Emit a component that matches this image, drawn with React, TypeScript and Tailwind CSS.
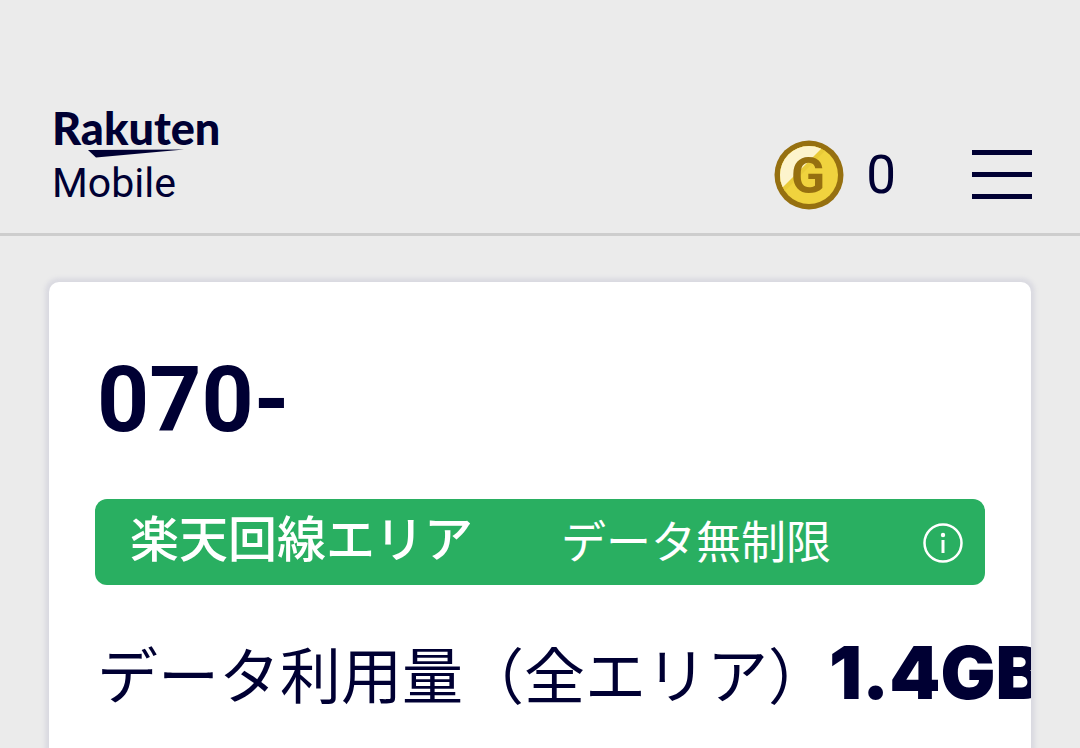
function Logo() {
  return (
    <svg width="176" height="114" viewBox="0 0 176 114" fill="#000033" role="img" aria-label="Rakuten Mobile">
      <text x="0" y="49" fontFamily="Lato, sans-serif" fontWeight="900" fontSize="45">
        Rakuten
      </text>
      <path d="M36 54 L132 53.5 L44 61.5 Z" />
      <text x="0" y="101" fontFamily="Roboto, sans-serif" fontWeight="400" fontSize="41">
        Mobile
      </text>
    </svg>
  );
}

function Coin() {
  return (
    <svg width="70" height="70" viewBox="0 0 70 70" aria-hidden="true">
      <defs>
        <clipPath id="coin-face">
          <circle cx="35" cy="35" r="29" />
        </clipPath>
      </defs>
      <circle cx="35" cy="35" r="34.5" fill="#967010" />
      <g clipPath="url(#coin-face)">
        <rect width="70" height="70" fill="#f0d33e" />
        <path d="M0 0 H62 L0 62 Z" fill="#e9cb38" />
        <path d="M0 0 H56 L0 56 Z" fill="#fdf4cc" />
      </g>
      <text
        x="34"
        y="53"
        textAnchor="middle"
        fontFamily="Roboto, sans-serif"
        fontWeight="700"
        fontSize="50"
        fill="#967010"
      >
        G
      </text>
    </svg>
  );
}

function InfoIcon() {
  return (
    <svg width="40" height="40" viewBox="0 0 40 40" fill="none" stroke="#fff" aria-hidden="true">
      <circle cx="20" cy="20" r="18.5" strokeWidth="2.5" />
      <circle cx="20" cy="12" r="2.2" fill="#fff" stroke="none" />
      <path d="M20 17 V30" strokeWidth="3" />
    </svg>
  );
}

export default function App() {
  return (
    <div className="flex h-screen flex-col overflow-hidden bg-[#ebebeb] font-['Roboto','Noto_Sans_CJK_JP',sans-serif] text-[#000033]">
      <header className="flex shrink-0 justify-between border-b-3 border-[#cdcdcd] pt-24 pr-12 pb-[23px] pl-[52px]">
        <Logo />
        <div className="flex items-center pt-[43px]">
          <Coin />
          <span className="ml-[22px] text-[53px] leading-[60px]">0</span>
          <button type="button" aria-label="メニュー" className="ml-[76px] flex flex-col gap-[17px]">
            <span className="h-[5px] w-[60px] bg-[#000033]" />
            <span className="h-[5px] w-[60px] bg-[#000033]" />
            <span className="h-[5px] w-[60px] bg-[#000033]" />
          </button>
        </div>
      </header>

      <main className="flex flex-1 flex-col px-[49px] pt-[46px]">
        <section className="flex-1 overflow-hidden rounded-t-[10px] bg-white px-[46px] pt-16 shadow-[0_0_4px_4px_#dadae1]">
          <h1 className="pl-0.5 text-[91px] leading-[108px] font-bold">070-</h1>

          <div className="mt-[45px] flex h-[86px] items-start rounded-xl bg-[#29af61] pt-3 pr-[22px] pl-[35px] text-white">
            <span className="text-[49px] leading-[60px] font-medium whitespace-nowrap">楽天回線エリア</span>
            <span className="ml-[88px] text-[45px] leading-[66px] whitespace-nowrap">データ無制限</span>
            <button type="button" aria-label="詳細" className="mt-3 ml-auto">
              <InfoIcon />
            </button>
          </div>

          <p className="mt-[47px] flex items-start pl-0.5 whitespace-nowrap">
            <span className="text-[61px] leading-[92px]">データ利用量（全エリア）</span>
            <strong className="font-['Inter'] text-[73px] leading-[82px] font-black">1.4GB</strong>
          </p>
        </section>
      </main>
    </div>
  );
}
